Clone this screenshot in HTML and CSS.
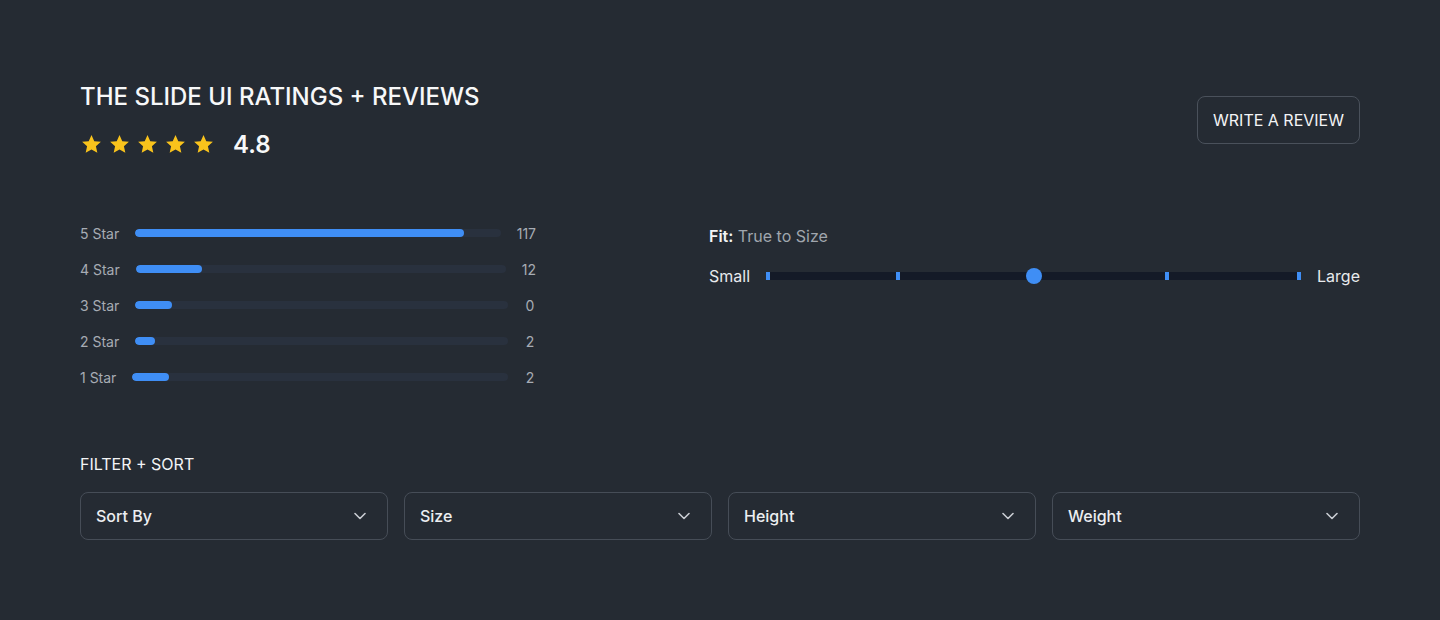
FILE: index.html
```html
<!DOCTYPE html>
<html lang="en">
<head>
<meta charset="utf-8">
<title>Ratings + Reviews</title>
<link rel="stylesheet" href="styles.css">
</head>
<body>
<div class="page">
  <header class="header">
    <div class="heading">
      <h1 class="title">THE SLIDE UI RATINGS + REVIEWS</h1>
      <div class="score">
        <div class="stars">
          <svg class="star" viewBox="0 0 24 24"><path d="M12 2.2l2.9 6.3 6.9.7-5.2 4.6 1.5 6.8L12 17.1l-6.1 3.5 1.5-6.8-5.2-4.6 6.9-.7z"/></svg>
          <svg class="star" viewBox="0 0 24 24"><path d="M12 2.2l2.9 6.3 6.9.7-5.2 4.6 1.5 6.8L12 17.1l-6.1 3.5 1.5-6.8-5.2-4.6 6.9-.7z"/></svg>
          <svg class="star" viewBox="0 0 24 24"><path d="M12 2.2l2.9 6.3 6.9.7-5.2 4.6 1.5 6.8L12 17.1l-6.1 3.5 1.5-6.8-5.2-4.6 6.9-.7z"/></svg>
          <svg class="star" viewBox="0 0 24 24"><path d="M12 2.2l2.9 6.3 6.9.7-5.2 4.6 1.5 6.8L12 17.1l-6.1 3.5 1.5-6.8-5.2-4.6 6.9-.7z"/></svg>
          <svg class="star" viewBox="0 0 24 24"><path d="M12 2.2l2.9 6.3 6.9.7-5.2 4.6 1.5 6.8L12 17.1l-6.1 3.5 1.5-6.8-5.2-4.6 6.9-.7z"/></svg>
        </div>
        <span class="score-value">4.8</span>
      </div>
    </div>
    <button class="write-btn">WRITE A REVIEW</button>
  </header>

  <section class="summary">
    <div class="breakdown">
      <div class="row"><span class="row-label">5 Star</span><div class="track"><div class="fill" style="width:90%"></div></div><span class="row-count">117</span></div>
      <div class="row"><span class="row-label">4 Star</span><div class="track"><div class="fill" style="width:18%"></div></div><span class="row-count">12</span></div>
      <div class="row"><span class="row-label">3 Star</span><div class="track"><div class="fill" style="width:9.7%"></div></div><span class="row-count">0</span></div>
      <div class="row"><span class="row-label">2 Star</span><div class="track"><div class="fill" style="width:5.4%"></div></div><span class="row-count">2</span></div>
      <div class="row"><span class="row-label">1 Star</span><div class="track"><div class="fill" style="width:9.7%"></div></div><span class="row-count">2</span></div>
    </div>
    <div class="fit">
      <div class="fit-title"><strong>Fit:</strong> <span class="fit-value">True to Size</span></div>
      <div class="fit-scale">
        <span class="fit-end">Small</span>
        <div class="scale">
          <span class="tick t0"></span>
          <span class="tick t25"></span>
          <span class="thumb"></span>
          <span class="tick t75"></span>
          <span class="tick t100"></span>
        </div>
        <span class="fit-end">Large</span>
      </div>
    </div>
  </section>

  <section class="filters">
    <h2 class="filters-title">FILTER + SORT</h2>
    <div class="selects">
      <div class="select"><span>Sort By</span><svg class="chev" viewBox="0 0 12 8"><path d="M1 1.5l5 5 5-5"/></svg></div>
      <div class="select"><span>Size</span><svg class="chev" viewBox="0 0 12 8"><path d="M1 1.5l5 5 5-5"/></svg></div>
      <div class="select"><span>Height</span><svg class="chev" viewBox="0 0 12 8"><path d="M1 1.5l5 5 5-5"/></svg></div>
      <div class="select"><span>Weight</span><svg class="chev" viewBox="0 0 12 8"><path d="M1 1.5l5 5 5-5"/></svg></div>
    </div>
  </section>
</div>
</body>
</html>
```

FILE: styles.css
```css
* { box-sizing: border-box; }
html, body {
  margin: 0;
  background: #252b33;
  height: 100%;
}
body {
  font-family: Inter, "Noto Sans", sans-serif;
  color: #f3f4f6;
}
.page {
  padding: 84px 80px 0;
}
.header {
  display: flex;
  justify-content: space-between;
  align-items: center;
}
.title {
  margin: 0;
  font-size: 24px;
  line-height: 26px;
  font-weight: 500;
  color: #f7f8f9;
}
.score {
  display: flex;
  align-items: center;
  margin-top: 22px;
  height: 24px;
}
.stars {
  display: flex;
  gap: 5px;
}
.star {
  width: 23px;
  height: 23px;
  fill: #f9c31c;
}
.score-value {
  margin-left: 18px;
  font-size: 24px;
  font-weight: 600;
  color: #f7f8f9;
}
.write-btn {
  height: 48px;
  padding: 0 15px;
  background: transparent;
  border: 1px solid #4a515b;
  border-radius: 8px;
  color: #f3f4f6;
  font-family: inherit;
  font-size: 16px;
  font-weight: 400;
  margin-top: -1px;
}
.summary {
  display: grid;
  grid-template-columns: 456px 1fr;
  column-gap: 173px;
  margin-top: 67px;
}
.breakdown {
  display: flex;
  flex-direction: column;
  gap: 16px;
}
.row {
  display: flex;
  align-items: center;
  height: 20px;
  gap: 16px;
  font-size: 14px;
  color: #a7acb4;
}
.row-label { white-space: nowrap; }
.track {
  flex: 1;
  height: 8px;
  border-radius: 4px;
  background: #29313e;
  overflow: hidden;
}
.fill {
  height: 100%;
  border-radius: 4px;
  background: #3f8ef5;
}
.row-count { min-width: 12px; text-align: center; }
.fit {
  display: flex;
  flex-direction: column;
  gap: 20px;
  padding-top: 3px;
}
.fit-title {
  font-size: 16px;
  line-height: 20px;
  color: #f3f4f6;
}
.fit-title strong { font-weight: 600; }
.fit-value { color: #a0a6ae; }
.fit-scale {
  display: flex;
  align-items: center;
  gap: 16px;
  height: 20px;
  font-size: 16px;
  color: #e8eaed;
}
.scale {
  flex: 1;
  position: relative;
  height: 8px;
  background: #141a27;
}
.tick {
  position: absolute;
  top: 0;
  width: 4px;
  height: 8px;
  background: #3f8ef5;
}
.t0 { left: 0; }
.t25 { left: calc(25% - 4px); }
.t75 { left: calc(75% - 2px); }
.t100 { right: 0; }
.thumb {
  position: absolute;
  left: 50%;
  top: 50%;
  width: 16px;
  height: 16px;
  margin: -8px 0 0 -8px;
  border-radius: 50%;
  background: #3f8ef5;
}
.filters {
  margin-top: 67px;
}
.filters-title {
  margin: 0;
  font-size: 16px;
  line-height: 20px;
  font-weight: 400;
  color: #f3f4f6;
}
.selects {
  margin-top: 18px;
  display: grid;
  grid-template-columns: repeat(4, 1fr);
  gap: 16px;
}
.select {
  height: 48px;
  border: 1px solid #464d57;
  border-radius: 8px;
  display: flex;
  align-items: center;
  justify-content: space-between;
  padding: 0 21px 0 15px;
  font-size: 16px;
  font-weight: 500;
  color: #eceef1;
}
.chev {
  width: 12px;
  height: 8px;
  fill: none;
  stroke: #c9cdd3;
  stroke-width: 1.6;
  stroke-linecap: round;
  stroke-linejoin: round;
}
```
